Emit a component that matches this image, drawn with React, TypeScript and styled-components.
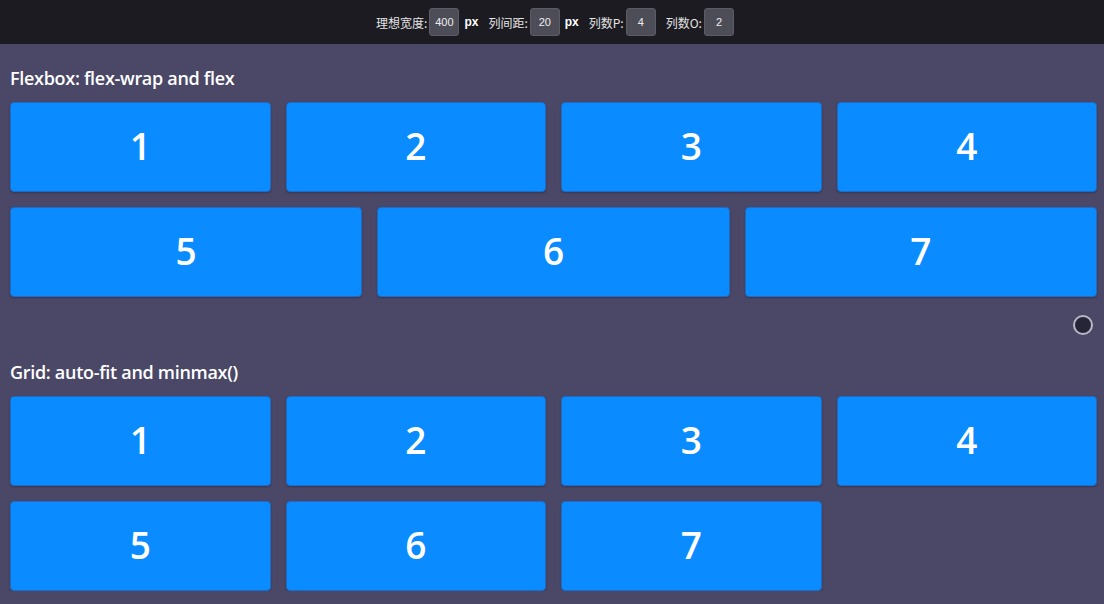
import React from 'react';
import styled, { createGlobalStyle } from 'styled-components';

const GlobalStyle = createGlobalStyle`
  html, body {
    margin: 0;
    padding: 0;
    background: #4a4866;
  }
  body {
    font-family: 'Open Sans', 'Noto Sans', sans-serif;
    color: #fff;
  }
`;

const items = [1, 2, 3, 4, 5, 6, 7];

const TopBar = styled.header`
  height: 44px;
  background: #1c1b22;
  display: flex;
  align-items: center;
  justify-content: center;
  padding-left: 6px;
`;

const Label = styled.span<{ $gap?: number }>`
  font-family: 'Noto Sans CJK SC', serif;
  font-size: 12px;
  color: #e4e4e4;
  margin-left: ${(p) => p.$gap ?? 0}px;
  margin-right: 2px;
`;

const Unit = styled.span`
  font-family: 'Liberation Sans', sans-serif;
  font-weight: 700;
  font-size: 12px;
  color: #fff;
  margin-left: 5px;
`;

const NumInput = styled.input`
  width: 30px;
  height: 28px;
  box-sizing: border-box;
  border: 1px solid #5b5b66;
  border-radius: 3px;
  background: #4d4d58;
  color: #eee;
  font-family: 'Liberation Sans', sans-serif;
  font-size: 11px;
  text-align: center;
  padding: 0;
  outline: none;
`;

const Main = styled.main`
  padding: 22px 7px 0 10px;
`;

const Title = styled.h2`
  margin: 0 0 12px;
  font-size: 18px;
  line-height: 24px;
  font-weight: 600;
  letter-spacing: -0.3px;
`;

const FlexWrap = styled.div`
  display: flex;
  flex-wrap: wrap;
  gap: 15px;
`;

const GridWrap = styled.div`
  display: grid;
  grid-template-columns: repeat(4, 1fr);
  gap: 15px;
`;

const Box = styled.div<{ $flex?: boolean }>`
  ${(p) => (p.$flex ? 'flex: 1 1 260px;' : '')}
  height: 90px;
  box-sizing: border-box;
  background: #0a8bff;
  border: 1px solid #1f6bc4;
  border-radius: 4px;
  box-shadow: 0 1px 2px rgba(20, 20, 40, 0.35);
  display: flex;
  align-items: center;
  justify-content: center;
  font-size: 37px;
  font-weight: 600;
  color: #fff;
  padding-bottom: 3px;
`;

const DotRow = styled.div`
  display: flex;
  justify-content: flex-end;
  margin: 18px 4px 25px 0;
`;

const Dot = styled.div`
  width: 20px;
  height: 20px;
  box-sizing: border-box;
  border-radius: 50%;
  background: #262538;
  border: 2px solid #b9b8c6;
`;

export default function App() {
  return (
    <>
      <GlobalStyle />
      <TopBar>
        <Label>理想宽度:</Label>
        <NumInput defaultValue="400" />
        <Unit>px</Unit>
        <Label $gap={10}>列间距:</Label>
        <NumInput defaultValue="20" />
        <Unit>px</Unit>
        <Label $gap={10}>列数P:</Label>
        <NumInput defaultValue="4" />
        <Label $gap={10}>列数O:</Label>
        <NumInput defaultValue="2" />
      </TopBar>
      <Main>
        <Title>Flexbox: flex-wrap and flex</Title>
        <FlexWrap>
          {items.map((n) => (
            <Box key={n} $flex>
              {n}
            </Box>
          ))}
        </FlexWrap>
        <DotRow>
          <Dot />
        </DotRow>
        <Title>Grid: auto-fit and minmax()</Title>
        <GridWrap>
          {items.map((n) => (
            <Box key={n}>{n}</Box>
          ))}
        </GridWrap>
      </Main>
    </>
  );
}
